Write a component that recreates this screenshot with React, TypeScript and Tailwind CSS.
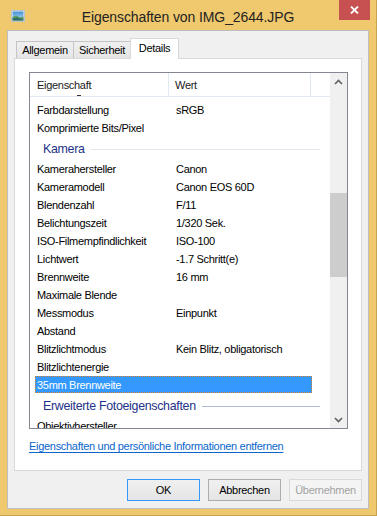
type Row = { name: string; value?: string; selected?: boolean };

const camera: Row[] = [
  { name: "Kamerahersteller", value: "Canon" },
  { name: "Kameramodell", value: "Canon EOS 60D" },
  { name: "Blendenzahl", value: "F/11" },
  { name: "Belichtungszeit", value: "1/320 Sek." },
  { name: "ISO-Filmempfindlichkeit", value: "ISO-100" },
  { name: "Lichtwert", value: "-1.7 Schritt(e)" },
  { name: "Brennweite", value: "16 mm" },
  { name: "Maximale Blende" },
  { name: "Messmodus", value: "Einpunkt" },
  { name: "Abstand" },
  { name: "Blitzlichtmodus", value: "Kein Blitz, obligatorisch" },
  { name: "Blitzlichtenergie" },
  { name: "35mm Brennweite", selected: true },
];

function PropRow({ row }: { row: Row }) {
  return (
    <div
      className={
        row.selected
          ? "ml-[5px] mb-px flex h-[17px] w-[277px] shrink-0 items-center border border-dotted border-[#d9822b] bg-[#3399ff] pt-[2px] text-white"
          : "ml-[5px] mb-px flex h-[17px] w-[277px] shrink-0 items-center border border-transparent pt-[2px] text-black"
      }
    >
      <span className="w-[140px] shrink-0 pl-px whitespace-nowrap">{row.name}</span>
      <span className="whitespace-nowrap">{row.value}</span>
    </div>
  );
}

function Group({ title, line }: { title: string; line: string }) {
  return (
    <div className="flex h-[23px] shrink-0 items-center pl-[13px] pr-[10px] pt-[2px]">
      <span className="whitespace-nowrap text-[12.4px] text-[#1e3287]">{title}</span>
      <div className={`ml-[6px] h-px flex-1 ${line}`} />
    </div>
  );
}

function Chevron({ up }: { up?: boolean }) {
  return (
    <svg width="9" height="6" viewBox="0 0 9 6">
      <path
        d={up ? "M1 5 L4.5 1.5 L8 5" : "M1 1 L4.5 4.5 L8 1"}
        fill="none"
        stroke="#606060"
        strokeWidth="1.6"
      />
    </svg>
  );
}

function Tab({ label, active, extra }: { label: string; active?: boolean; extra?: string }) {
  return (
    <div
      className={
        active
          ? `relative z-10 -ml-px flex h-[21px] items-center justify-center border border-b-0 border-[#d9d9d9] bg-white ${extra}`
          : `mt-[3px] flex h-[17px] items-center justify-center border border-b-0 border-[#c4c4c4] bg-gradient-to-b from-[#f0f0f0] to-[#e5e5e5] ${extra}`
      }
    >
      <span className={active ? "-mt-[2px]" : ""}>{label}</span>
    </div>
  );
}

export default function App() {
  return (
    <div className="flex h-[516px] w-[377px] flex-col border-r border-b border-[#c9a24f] bg-[#f0c96e] font-['Liberation_Sans',Arial,sans-serif] text-[11px] tracking-[-0.3px] text-black">
      {/* title bar */}
      <div className="grid h-[30px] grid-cols-[1fr_auto_1fr]">
        <div className="flex items-start pl-[11px] pt-[10px]">
          <svg width="14" height="12" viewBox="0 0 14 12">
            <rect x="0" y="0" width="14" height="12" fill="#f4f4f4" />
            <rect x="0.5" y="0.5" width="13" height="11" fill="none" stroke="#b9c4cc" />
            <defs>
              <linearGradient id="sky" x1="0" y1="0" x2="0" y2="1">
                <stop offset="0" stopColor="#3f8fd6" />
                <stop offset="1" stopColor="#bfe3f5" />
              </linearGradient>
            </defs>
            <rect x="1.5" y="1.5" width="11" height="9" fill="url(#sky)" />
            <path d="M1.5 7 L5 5.5 L9 7.5 L12.5 6.5 L12.5 10.5 L1.5 10.5 Z" fill="#5c9a62" />
            <path d="M1.5 8.5 L6 7.5 L12.5 9.5 L12.5 10.5 L1.5 10.5 Z" fill="#2f6d6a" />
          </svg>
        </div>
        <div className="pt-[7px] text-[14px] tracking-[-0.1px] text-[#222]">Eigenschaften von IMG_2644.JPG</div>
        <div className="flex justify-end pr-[6px]">
          <div className="flex h-[20px] w-[31px] items-center justify-center bg-[#c75050]">
            <svg width="9" height="8" viewBox="0 0 9 8">
              <path d="M1 0.5 L8 7.5 M8 0.5 L1 7.5" stroke="white" strokeWidth="1.8" />
            </svg>
          </div>
        </div>
      </div>

      {/* client area */}
      <div className="ml-[7px] flex h-[479px] w-[362px] flex-col border border-[#bdbdbd] bg-[#f0f0f0] px-[6px] pt-[7px]">
        <div className="-mb-px flex items-start pl-[2px]">
          <Tab label="Allgemein" extra="w-[58px]" />
          <Tab label="Sicherheit" extra="w-[57px] border-l-0" />
          <Tab label="Details" active extra="w-[49px]" />
        </div>

        <div className="flex h-[413px] w-[348px] flex-col border border-[#d9d9d9] bg-white px-[14px] pt-[13px]">
          {/* list view */}
          <div className="flex h-[357px] w-[319px] shrink-0 overflow-hidden border border-[#828790]">
            <div className="flex min-w-0 flex-1 flex-col">
              <div className="relative flex h-[24px] shrink-0 border-b border-[#e3e9f1] text-[#1a1a1a]">
                <div className="flex w-[139px] items-center border-r border-[#e3e9f1] pl-[7px] pt-px">Eigenschaft</div>
                <div className="flex w-[142px] items-center border-r border-[#e3e9f1] pl-[6px] pt-px">Wert</div>
                <div className="absolute left-[47px] top-[22px] h-px w-[4px] bg-[#333]" />
              </div>
              <div className="flex min-h-0 flex-col overflow-hidden pt-[4px]">
                <PropRow row={{ name: "Farbdarstellung", value: "sRGB" }} />
                <PropRow row={{ name: "Komprimierte Bits/Pixel" }} />
                <Group title="Kamera" line="bg-[#e1e5ee]" />
                {camera.map((r) => (
                  <PropRow key={r.name} row={r} />
                ))}
                <Group title="Erweiterte Fotoeigenschaften" line="bg-[#b3bad8]" />
                <PropRow row={{ name: "Objektivhersteller" }} />
              </div>
            </div>
            {/* scrollbar */}
            <div className="flex w-[17px] shrink-0 flex-col bg-[#f0f0f0]">
              <div className="flex h-[17px] shrink-0 items-center justify-center">
                <Chevron up />
              </div>
              <div className="flex flex-1 flex-col pt-[103px]">
                <div className="h-[84px] bg-[#cdcdcd]" />
              </div>
              <div className="flex h-[17px] shrink-0 items-center justify-center">
                <Chevron />
              </div>
            </div>
          </div>

          <div className="mt-[9px]">
            <span className="text-[#0a66cc] underline underline-offset-[2px]">
              Eigenschaften und persönliche Informationen entfernen
            </span>
          </div>
        </div>

        {/* buttons */}
        <div className="mt-[8px] flex justify-end gap-[8px]">
          <button className="h-[22px] w-[73px] border border-[#3399ff] bg-gradient-to-b from-[#f0f0f0] to-[#e5e5e5] text-black">
            OK
          </button>
          <button className="h-[22px] w-[73px] border border-[#acacac] bg-gradient-to-b from-[#f0f0f0] to-[#e5e5e5] text-black">
            Abbrechen
          </button>
          <button className="h-[22px] w-[73px] border border-[#d9d9d9] bg-[#f4f4f4] text-[#a3a3a3]">
            Übernehmen
          </button>
        </div>
      </div>
    </div>
  );
}
